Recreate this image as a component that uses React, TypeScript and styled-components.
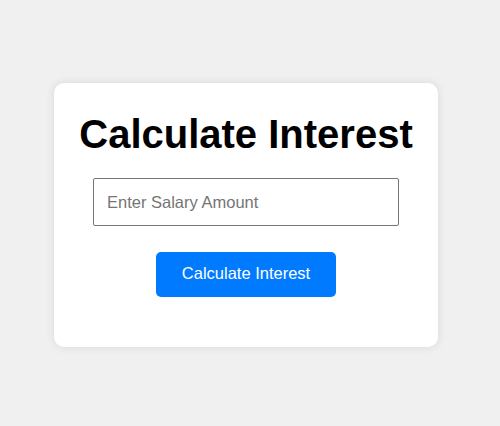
import React, { useState } from "react";
import styled, { createGlobalStyle } from "styled-components";

const GlobalStyle = createGlobalStyle`
  html, body {
    margin: 0;
    padding: 0;
    background: #f0f0f0;
    font-family: "Liberation Sans", Arial, sans-serif;
  }
  * { box-sizing: border-box; }
`;

const Page = styled.div`
  min-height: 100vh;
  display: flex;
  align-items: center;
  justify-content: center;
  padding: 4px 8px 0 0;
`;

const Card = styled.div`
  width: 384px;
  height: 264px;
  background: #ffffff;
  border-radius: 10px;
  box-shadow: 0 0 10px rgba(0, 0, 0, 0.1);
  display: flex;
  flex-direction: column;
  align-items: center;
  padding-top: 28px;
`;

const Title = styled.h1`
  margin: 0 0 21px;
  font-size: 40px;
  font-weight: bold;
  color: #000;
  line-height: 46px;
`;

const Input = styled.input`
  width: 306px;
  height: 48px;
  padding: 0 13px;
  border: 1px solid #767676;
  border-radius: 2px;
  font-family: "Liberation Sans", Arial, sans-serif;
  font-size: 16.5px;
  color: #000;
  outline: none;
  margin: 0 0 26px;
  &::placeholder {
    color: #757575;
  }
`;

const Button = styled.button`
  width: 180px;
  height: 45px;
  padding: 0 0 2px;
  border: none;
  border-radius: 5px;
  background: #007bff;
  color: #ffffff;
  font-family: "Liberation Sans", Arial, sans-serif;
  font-size: 16.5px;
  cursor: pointer;
`;

export default function App() {
  const [salary, setSalary] = useState("");
  return (
    <>
      <GlobalStyle />
      <Page>
        <Card>
          <Title>Calculate Interest</Title>
          <Input
            type="text"
            placeholder="Enter Salary Amount"
            value={salary}
            onChange={(e) => setSalary(e.target.value)}
          />
          <Button type="button">Calculate Interest</Button>
        </Card>
      </Page>
    </>
  );
}
